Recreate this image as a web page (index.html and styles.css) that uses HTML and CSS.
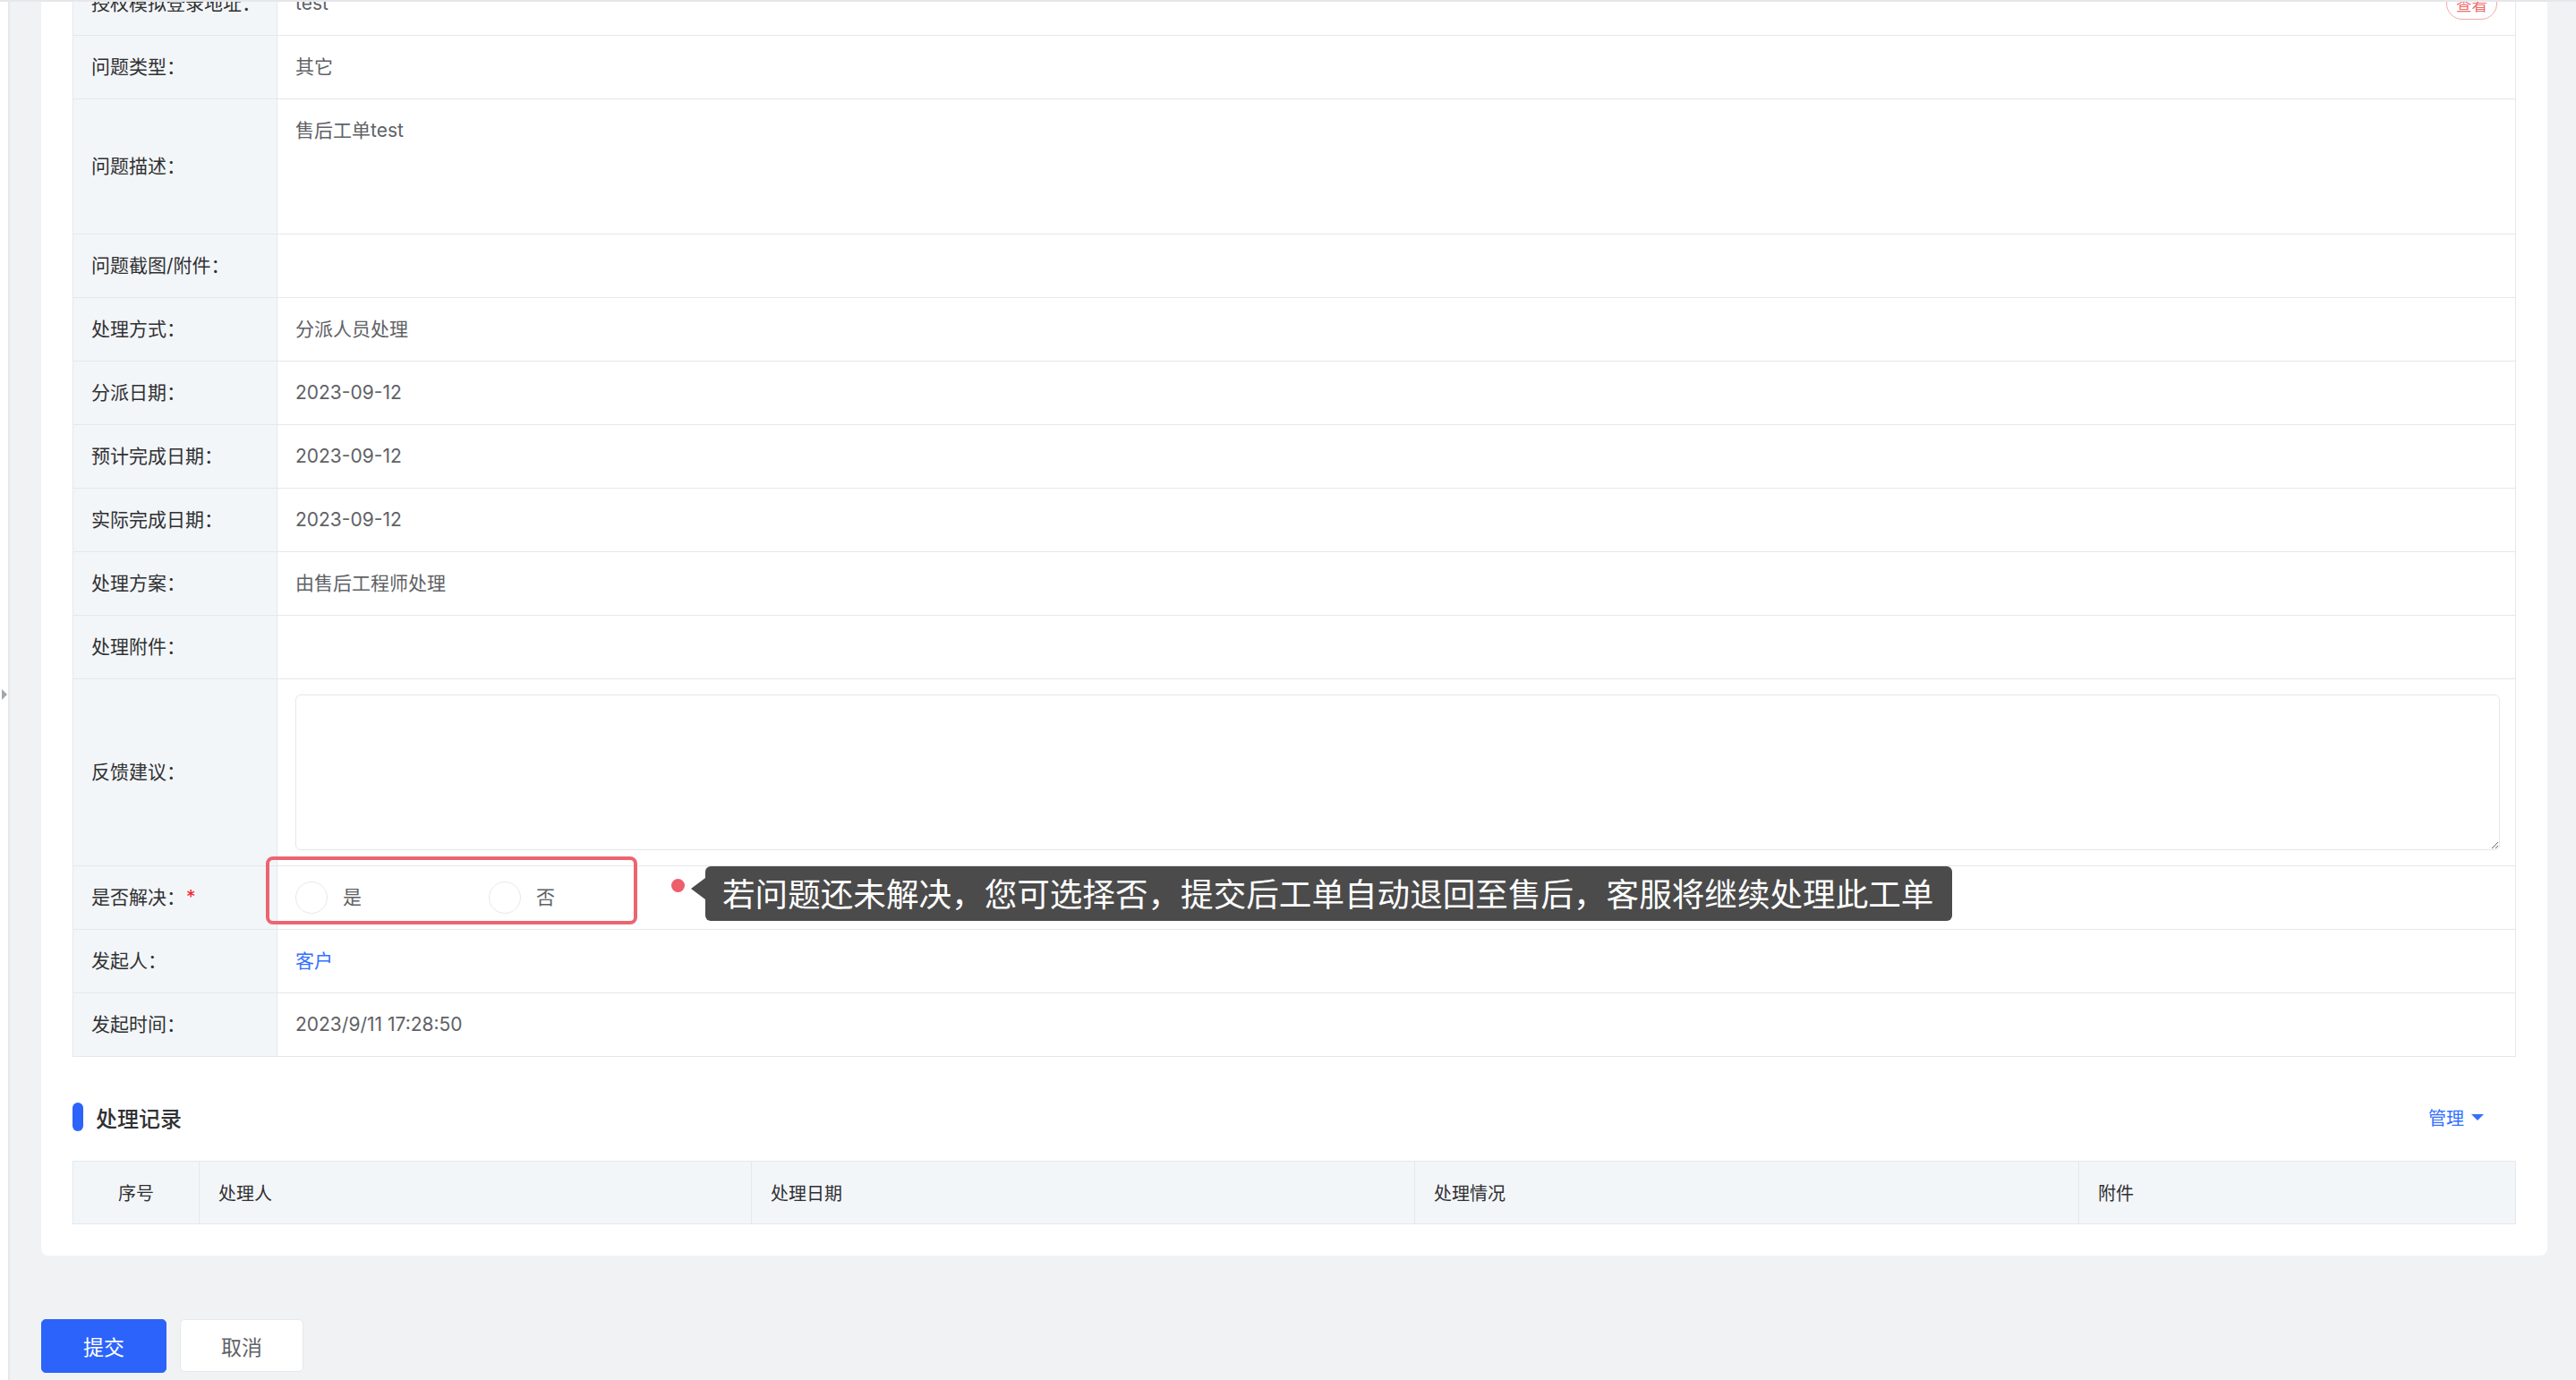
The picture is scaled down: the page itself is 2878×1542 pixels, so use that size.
FILE: index.html
```html
<!DOCTYPE html>
<html lang="zh-CN">
  <head>
    <meta charset="UTF-8" />
    <meta name="viewport" content="width=device-width, initial-scale=1.0" />
    <title>售后工单</title>
    <link rel="stylesheet" href="styles.css">
  </head>

  <body>
    <div class="topline"></div>
    <div class="layout">
      <div class="sidebar"><span class="fold"></span></div>

      <div class="main">
        <div class="card">
          <!-- ticket details -->
          <div class="desc">
            <div class="row">
              <div class="label">授权模拟登录地址：</div>
              <div class="value value-split">
                <span>test</span>
                <button class="btn-view">查看</button>
              </div>
            </div>
            <div class="row">
              <div class="label">问题类型：</div>
              <div class="value">其它</div>
            </div>
            <div class="row row-tall">
              <div class="label">问题描述：</div>
              <div class="value">售后工单test</div>
            </div>
            <div class="row">
              <div class="label">问题截图/附件：</div>
              <div class="value"></div>
            </div>
            <div class="row">
              <div class="label">处理方式：</div>
              <div class="value">分派人员处理</div>
            </div>
            <div class="row">
              <div class="label">分派日期：</div>
              <div class="value">2023-09-12</div>
            </div>
            <div class="row">
              <div class="label">预计完成日期：</div>
              <div class="value">2023-09-12</div>
            </div>
            <div class="row">
              <div class="label">实际完成日期：</div>
              <div class="value">2023-09-12</div>
            </div>
            <div class="row">
              <div class="label">处理方案：</div>
              <div class="value">由售后工程师处理</div>
            </div>
            <div class="row">
              <div class="label">处理附件：</div>
              <div class="value"></div>
            </div>
            <div class="row">
              <div class="label">反馈建议：</div>
              <div class="value value-input">
                <textarea class="feedback"></textarea>
              </div>
            </div>
            <div class="row">
              <div class="label">是否解决：<span class="required">*</span></div>
              <div class="value value-radio">
                <label class="radio"><span class="radio-dot"></span>是</label>
                <label class="radio"><span class="radio-dot"></span>否</label>

                <!-- review annotation -->
                <div class="mark-box"></div>
                <div class="mark-dot"></div>
                <div class="mark-tip">若问题还未解决，您可选择否，提交后工单自动退回至售后，客服将继续处理此工单</div>
              </div>
            </div>
            <div class="row">
              <div class="label">发起人：</div>
              <div class="value"><a class="link">客户</a></div>
            </div>
            <div class="row">
              <div class="label">发起时间：</div>
              <div class="value">2023/9/11 17:28:50</div>
            </div>
          </div>

          <!-- processing records -->
          <div class="section-head">
            <div class="section-title"><span class="bar"></span>处理记录</div>
            <a class="manage">管理<span class="caret"></span></a>
          </div>
          <table class="records">
            <colgroup>
              <col style="width: 141px" />
              <col style="width: 617px" />
              <col style="width: 741px" />
              <col style="width: 742px" />
              <col />
            </colgroup>
            <thead>
              <tr>
                <th class="center">序号</th>
                <th>处理人</th>
                <th>处理日期</th>
                <th>处理情况</th>
                <th>附件</th>
              </tr>
            </thead>
          </table>
        </div>

        <div class="actions">
          <button class="btn btn-primary">提交</button>
          <button class="btn">取消</button>
        </div>
      </div>
    </div>
  </body>
</html>
```

FILE: styles.css
```css
html,
body {
  margin: 0;
  padding: 0;
  height: 100%;
}

body {
  font-family: Inter, "Noto Sans CJK SC", sans-serif;
  font-size: 21px;
  color: #303133;
  background-color: #f1f2f4;
  overflow: hidden;
}

.topline {
  height: 2px;
  background-color: #e6e7ea;
}

.layout {
  display: flex;
  height: calc(100vh - 2px);
}

.sidebar {
  width: 11px;
  flex-shrink: 0;
  background-color: #ffffff;
  border-right: 2px solid #e7e8eb;
  display: flex;
  align-items: center;
  padding: 7px 0 0 2px;
  box-sizing: border-box;
}

.fold {
  width: 0;
  height: 0;
  border-top: 6px solid transparent;
  border-bottom: 6px solid transparent;
  border-left: 6px solid #a3a6ad;
}

.main {
  flex: 1;
  overflow: hidden;
  padding: 0 32px 0 35px;
}

/* page is scrolled a little */
.card {
  margin-top: -34px;
  background-color: #ffffff;
  border-radius: 0 0 8px 8px;
  padding: 0 35px 35px 35px;
}

.desc {
  border: 1px solid #e4e7ed;
  border-bottom: none;
}

.row {
  display: flex;
  border-bottom: 1px solid #e4e7ed;
}

.label {
  width: 228px;
  flex-shrink: 0;
  box-sizing: border-box;
  padding: 0 20px;
  line-height: 32px;
  background-color: #f3f6f9;
  border-right: 1px solid #e4e7ed;
  display: flex;
  align-items: center;
  color: #303133;
  white-space: nowrap;
}

.required {
  color: #f5222d;
  margin-left: 1px;
}

.value {
  flex: 1;
  height: 70px;
  box-sizing: border-box;
  padding: 19px 20px;
  line-height: 32px;
  color: #606266;
}

.row-tall .value {
  height: 150px;
}

.value-split {
  display: flex;
  justify-content: space-between;
  align-items: center;
  padding-right: 20px;
}

.btn-view {
  height: 36px;
  padding: 0 10px;
  border: 1px solid #f3a9a9;
  border-radius: 18px;
  background-color: #ffffff;
  color: #f06c6c;
  font-family: inherit;
  font-size: 17.5px;
}

.value-input {
  height: 208px;
  padding: 17px 17px 17px 20px;
}

.feedback {
  display: block;
  width: 100%;
  height: 174px;
  box-sizing: border-box;
  border: 1px solid #e4e7ed;
  border-radius: 6px;
  font-family: inherit;
  font-size: 21px;
}

.value-radio {
  position: relative;
  display: flex;
  align-items: center;
}

.radio {
  display: inline-flex;
  align-items: center;
  gap: 17px;
  margin-right: 142px;
  color: #606266;
}

.radio-dot {
  width: 36px;
  height: 36px;
  border: 1px solid #e6e8eb;
  border-radius: 50%;
  box-sizing: border-box;
}

.mark-box {
  position: absolute;
  left: -13px;
  top: -11px;
  width: 415px;
  height: 76px;
  box-sizing: border-box;
  border: 4px solid #ec6470;
  border-radius: 8px;
}

.mark-dot {
  position: absolute;
  left: 440px;
  top: 14px;
  width: 15px;
  height: 15px;
  border-radius: 50%;
  background-color: #ec5f6b;
}

.mark-tip {
  position: absolute;
  left: 478px;
  top: 0;
  height: 61px;
  padding: 0 21px 0 19px;
  line-height: 60px;
  border-radius: 6px;
  background-color: #4b4b4b;
  color: #ffffff;
  font-family: "Noto Sans CJK SC", sans-serif;
  font-size: 36.6px;
  white-space: nowrap;
}

.mark-tip::before {
  content: "";
  position: absolute;
  left: -16px;
  top: 13px;
  border-top: 12px solid transparent;
  border-bottom: 12px solid transparent;
  border-right: 16px solid #4b4b4b;
}

.link {
  color: #3370ff;
}

.section-head {
  display: flex;
  justify-content: space-between;
  align-items: center;
  margin: 51px 0 33px 0;
  height: 32px;
}

.section-title {
  display: flex;
  align-items: center;
  font-size: 24px;
  font-weight: 500;
  color: #303133;
}

.bar {
  width: 12px;
  height: 32px;
  border-radius: 6px;
  background-color: #2c63fb;
  margin-right: 14px;
}

.manage {
  display: flex;
  align-items: center;
  margin-right: 36px;
  color: #3370ff;
  font-size: 20px;
}

.caret {
  margin-left: 8px;
  width: 0;
  height: 0;
  border-left: 7px solid transparent;
  border-right: 7px solid transparent;
  border-top: 7px solid #3370ff;
}

.records {
  width: 100%;
  border-collapse: collapse;
  table-layout: fixed;
}

.records th {
  height: 69px;
  padding: 0 21px;
  background-color: #f3f6f9;
  border: 1px solid #e4e7ed;
  text-align: left;
  font-weight: normal;
  font-size: 20px;
  color: #303133;
}

.records th.center {
  text-align: center;
}

.actions {
  display: flex;
  gap: 15px;
  margin-top: 71px;
}

.btn {
  width: 138px;
  height: 59px;
  border: 1px solid #e6e8eb;
  border-radius: 5px;
  background-color: #ffffff;
  color: #606266;
  font-family: inherit;
  font-size: 23px;
}

.btn-primary {
  width: 140px;
  height: 60px;
  border-color: #2c63fb;
  background-color: #2c63fb;
  color: #ffffff;
}
```
